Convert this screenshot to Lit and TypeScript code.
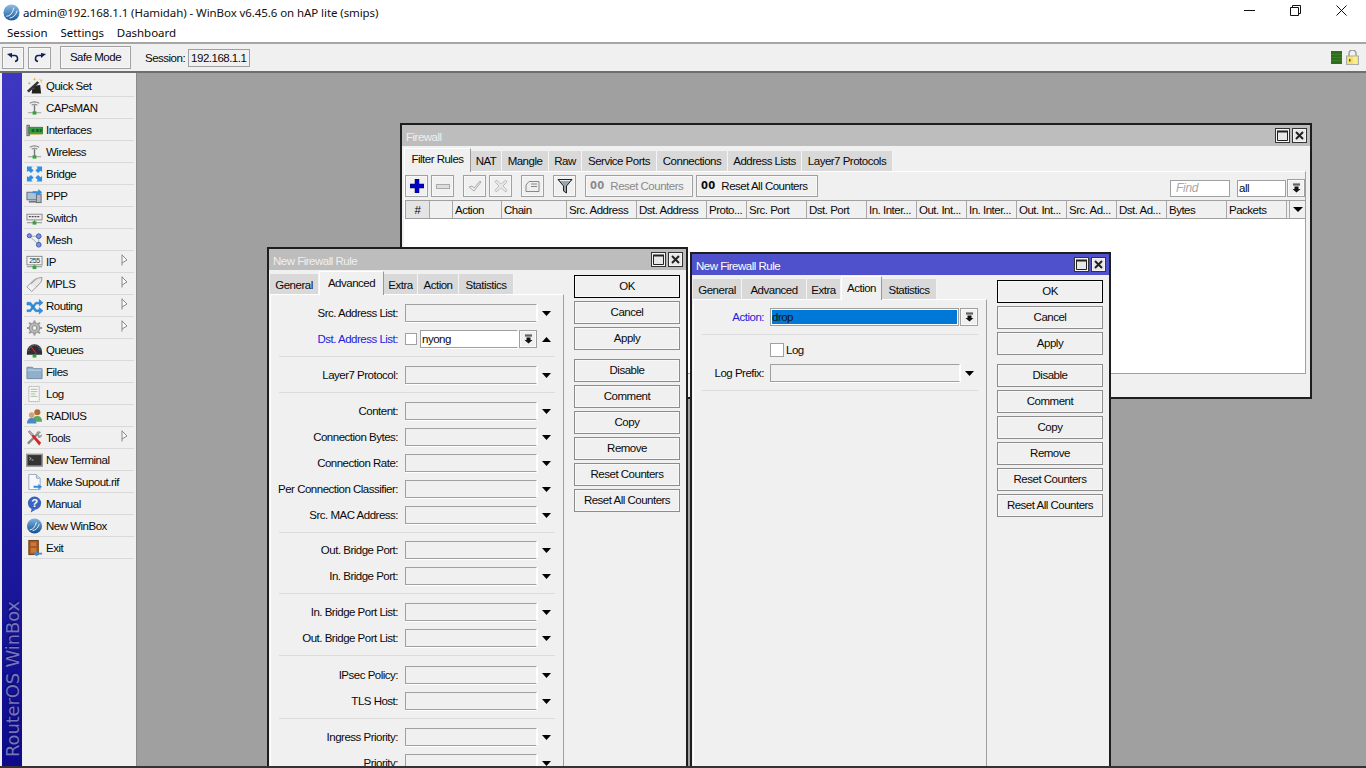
import { LitElement, html, css, svg } from "lit";
import { customElement } from "lit/decorators.js";

const ic = (b: any, box = "0 0 18 18") => html`<svg class="ic" viewBox=${box} width="17" height="18">${b}</svg>`;
const antenna = svg`<path d="M4 4q5-3 10 0M6 6q3-2 6 0" fill="none" stroke="#8a8a8a" stroke-width="1.2"/><path d="M9 6v7" stroke="#777" stroke-width="1.5"/><path d="M2 14h14" stroke="#9a9a9a"/><rect x="7" y="12.5" width="4" height="3.5" fill="#2fa82f"/>`;
const icons: Record<string, any> = {
  quick: ic(svg`<path d="M7 9l8-1 1 9H6z" fill="#222"/><path d="M6 12l2-2 1 1.500" fill="#bbb"/><path d="M1 14L12 4l2 1.500L3 16z" fill="#333"/><path d="M3 4l1 1.500 1.500.5-1.500.5-.5 1.500-.5-1.500-1.500-.5 1.500-.5z M9 0l.7 1.300 1.300.5-1.300.4-.7 1.300-.5-1.300-1.300-.4 1.300-.5z" fill="#e0b020"/><path d="M14 2l1 1 2-.5-1 1.500.5 1.500" stroke="#d8c060" fill="none"/>`),
  antenna: ic(antenna),
  card: ic(svg`<rect x="1" y="4" width="2.500" height="11" fill="#9fb5a5" stroke="#667"/><rect x="3" y="6" width="15" height="7" fill="#3f9a45" stroke="#2a6a30" stroke-width=".6"/><path d="M6 8h3v3H6zM10.500 8h3v3h-3zM14.500 8h2v3h-2z" fill="#163"/><path d="M4 13.500h13" stroke="#c8b040"/>`),
  bridge: ic(svg`<g fill="#2f8fe0"><path d="M1 1h6L5.500 2.700 8 5.200 5.200 8 2.700 5.500 1 7z"/><path d="M17 1v6l-1.700-1.500L12.800 8 10 5.200l2.500-2.500L11 1z"/><path d="M1 17v-6l1.700 1.500L5.200 10 8 12.800l-2.500 2.500L7 17z"/><path d="M17 17h-6l1.500-1.700L10 12.800 12.800 10l2.500 2.500L17 11z"/></g>`),
  ppp: ic(svg`<rect x="1" y="5" width="11" height="8" fill="#a8c4dc" stroke="#667"/><rect x="11" y="7" width="5" height="9" fill="#b8b8b8" stroke="#667"/><path d="M3 15h8" stroke="#777" stroke-width="2"/><path d="M7 4h6V1.500l4 3.500-4 3.500V6H7z" fill="#2f8fe0"/>`),
  sw: ic(svg`<rect x="1" y="5" width="16" height="6" fill="#eee" stroke="#888"/><path d="M3 7.500h2m1 0h2m1 0h2m1 0h2" stroke="#444" stroke-width="1.500"/><path d="M9 11v3M1 14h16" stroke="#888"/><rect x="7" y="12.500" width="4" height="3.500" fill="#2fa82f"/>`),
  mesh: ic(svg`<path d="M4 5h10M13.500 5v9M4 5l4 4 6 5" fill="none" stroke="#9aa" /><g fill="#7d90e0" stroke="#3f55b0"><circle cx="3.500" cy="4.500" r="2.200"/><circle cx="13.500" cy="5" r="2.500"/><circle cx="13.500" cy="14" r="2.500"/></g>`),
  ip: ic(svg`<rect x="1" y="3" width="16" height="9" fill="#f4f4f4" stroke="#888"/><text x="9" y="10.500" font-size="7.500" text-anchor="middle" font-family="Liberation Sans" fill="#333">255</text><path d="M9 12v2M1 14h16" stroke="#888"/><rect x="7" y="13" width="4" height="3.500" fill="#2fa82f"/>`),
  mpls: ic(svg`<g fill="#f2f2f2" stroke="#999"><path d="M1 12L9 4l6-1-1 6-8 8z"/><path d="M5 9l7-6 5-1-1 5-6 6" fill="#e8e8e8"/></g>`),
  routing: ic(svg`<path d="M1 5h4l6 8h3v-2.500l4 3.500-4 3.500V15h-4L4 8H1z M1 13h3l6-8h4V2l4 3.500L14 9V7h-3l-6 8H1z" fill="#2f8fe0" stroke="#1c6cb0" stroke-width=".4"/>`),
  gear: ic(svg`<circle cx="9" cy="9" r="5.500" fill="#bbb" stroke="#888"/><circle cx="9" cy="9" r="2.500" fill="#f0f0f0" stroke="#888"/><path d="M9 1v3M9 14v3M1 9h3M14 9h3M3.300 3.300l2 2M12.700 12.700l2 2M3.300 14.700l2-2M12.700 5.300l2-2" stroke="#999" stroke-width="2.200"/>`),
  queues: ic(svg`<path d="M1 11a8 8 0 0 1 16 0v3H1z" fill="#2e2e38"/><path d="M5 5l6 8" stroke="#e02020" stroke-width="1.200"/><path d="M3 10a6 6 0 0 1 12 0" fill="none" stroke="#8a8a98" stroke-dasharray="1 1"/><rect x="7" y="14" width="4" height="3" fill="#2fa82f"/>`),
  files: ic(svg`<path d="M1 4h6l1 1.500h9V16H1z" fill="#8fb0cc" stroke="#6c8aa4"/><path d="M1.500 7h15" stroke="#c8dcec"/>`),
  log: ic(svg`<path d="M3 1h11v16H3z" fill="#f6f6f2" stroke="#a8b0a8" stroke-dasharray="1.500 .5"/><path d="M5 4h7M5 6.500h7M5 9h5M5 11.500h7" stroke="#a8b8a8"/>`),
  radius: ic(svg`<circle cx="12" cy="5" r="3.200" fill="#b06a35"/><path d="M7 15q0-6 5-6t5 6z" fill="#5aa860"/><circle cx="6" cy="8" r="3" fill="#d8a070"/><path d="M1 17q0-6 5-6t5 6z" fill="#4a88c8"/>`),
  tools: ic(svg`<path d="M2 15L13 4" stroke="#888" stroke-width="2.500"/><path d="M11 3a3.500 3.500 0 0 1 5 0l-2.500 2 1 1.500L17 5a3.500 3.500 0 0 1-4 4z" fill="#999"/><path d="M2 2l2-1 12 13-2 3z" fill="#cf2a2a"/><path d="M2 2l2-1 4 4-2 2z" fill="#aaa"/>`),
  term: ic(svg`<rect x=".8" y="3" width="16.400" height="12.500" fill="#333" stroke="#999" stroke-width="1.600"/><path d="M3.500 6l2 1.500-2 1.500M6 9h2" stroke="#ddd" fill="none" stroke-width=".8"/>`),
  sup: ic(svg`<path d="M3 1h8l4 4v12H3z" fill="#f8f8f8" stroke="#9ab"/><path d="M11 1v4h4" fill="#ddd" stroke="#9ab"/><path d="M8 13h5v-2l4 3-4 3v-2H8z" fill="#2f8fe0"/>`),
  manual: ic(svg`<circle cx="9" cy="8" r="7" fill="#3c62c0"/><path d="M6 14l-1 4 5-3z" fill="#3c62c0"/><text x="9" y="12.500" font-size="12" font-weight="bold" text-anchor="middle" font-family="Liberation Sans" fill="#fff">?</text>`),
  ball: ic(svg`<defs><linearGradient id="bl" x1="0" y1="0" x2="0" y2="1"><stop offset="0" stop-color="#7fb4e0"/><stop offset="1" stop-color="#124e8c"/></linearGradient></defs><circle cx="9" cy="9" r="8" fill="url(#bl)"/><path d="M4 13q5 0 7-8M7 14q5-1 7-7" stroke="#eaf4ff" fill="none" stroke-width="1"/>`),
  exit: ic(svg`<rect x="3" y="1" width="10" height="15" fill="#a85a22" stroke="#703a12"/><rect x="5" y="3" width="6" height="4" fill="#c87a3a"/><rect x="5" y="9" width="6" height="5" fill="#c87a3a"/><path d="M8 14h4v-2l-4 3.500 4 2.500v-2h5v-2z" fill="#2f8fe0"/>`),
};

const menu = [
  ["Quick Set", "quick", 0], ["CAPsMAN", "antenna", 0], ["Interfaces", "card", 0], ["Wireless", "antenna", 0],
  ["Bridge", "bridge", 0], ["PPP", "ppp", 0], ["Switch", "sw", 0], ["Mesh", "mesh", 0], ["IP", "ip", 1],
  ["MPLS", "mpls", 1], ["Routing", "routing", 1], ["System", "gear", 1], ["Queues", "queues", 0], ["Files", "files", 0],
  ["Log", "log", 0], ["RADIUS", "radius", 0], ["Tools", "tools", 1], ["New Terminal", "term", 0],
  ["Make Supout.rif", "sup", 0], ["Manual", "manual", 0], ["New WinBox", "ball", 0], ["Exit", "exit", 0],
] as [string, string, number][];

const fwTabs: [string, number][] = [["Filter Rules", 67], ["NAT", 31], ["Mangle", 47], ["Raw", 33], ["Service Ports", 75], ["Connections", 71], ["Address Lists", 74], ["Layer7 Protocols", 91]];
const cols: [string, number][] = [["#", 24], ["", 23], ["Action", 49], ["Chain", 65], ["Src. Address", 70], ["Dst. Address", 70], ["Proto...", 40], ["Src. Port", 60], ["Dst. Port", 60], ["In. Inter...", 50], ["Out. Int...", 50], ["In. Inter...", 50], ["Out. Int...", 50], ["Src. Ad...", 50], ["Dst. Ad...", 50], ["Bytes", 60], ["Packets", 60], ["", 3]];
const ruleTabs: [string, number][] = [["General", 49], ["Advanced", 65], ["Extra", 34], ["Action", 41], ["Statistics", 55]];
const ruleButtons = ["OK", "Cancel", "Apply", "", "Disable", "Comment", "Copy", "Remove", "Reset Counters", "Reset All Counters"];
const groups = [
  ["Src. Address List:", "@dst"],
  ["Layer7 Protocol:"],
  ["Content:", "Connection Bytes:", "Connection Rate:", "Per Connection Classifier:", "Src. MAC Address:"],
  ["Out. Bridge Port:", "In. Bridge Port:"],
  ["In. Bridge Port List:", "Out. Bridge Port List:"],
  ["IPsec Policy:", "TLS Host:"],
  ["Ingress Priority:", "Priority:"],
];

@customElement("app-root")
export class AppRoot extends LitElement {
  static styles = css`
    :host { display: block; width: 1366px; height: 768px; overflow: hidden; background: #fff; font: 11.5px "Liberation Sans", Arial, sans-serif; letter-spacing: -0.5px; color: #0a0a0a; }
    * { box-sizing: border-box; }
    svg { display: block; flex: none; }
    .titlebar { height: 24px; display: flex; align-items: center; padding-left: 3px; font: 11.5px "Noto Sans", sans-serif; letter-spacing: -0.08px; color: #111; }
    .titlebar .t { margin-left: 3px; flex: 1; }
    .winbtns { display: flex; align-self: flex-start; padding: 5px 2px 0 0; }
    .winbtns span { width: 46px; height: 11px; display: flex; justify-content: center; }
    .menubar { height: 17px; display: flex; padding-left: 7px; gap: 13px; font: 11.5px "Noto Sans", sans-serif; letter-spacing: -0.05px; align-items: center; }
    .toolbar { height: 31px; margin-top: 1px; background: #f0f0f0; border-top: 2px solid #a6a6a6; border-bottom: 2px solid #6e6e6e; display: flex; align-items: center; padding: 0 7px 0 2px; }
    .tb { border: 1px solid #a0a0a0; box-shadow: inset 0 0 0 1px #f8f8f8; background: #f0f0f0; height: 22px; display: flex; align-items: center; justify-content: center; }
    .tb.u { width: 22px; } .tb.r { width: 23px; margin-left: 4px; }
    .tb.safe { width: 71px; margin-left: 9px; height: 23px; padding-bottom: 1px; }
    .sess { margin-left: 14px; }
    .sessv { margin-left: 3px; width: 62px; height: 18px; border: 1px solid #a0a0a0; padding-left: 2px; line-height: 16px; flex: 1 0 62px; max-width: 62px; margin-right: auto; background: #f0f0f0; }
    .lock { margin-left: 4px; }
    .main { display: flex; height: 693px; }
    .side { width: 137px; display: flex; background: #f0f0f0; border-right: 1px solid #8a8a8a; padding-left: 2px; flex: none; }
    .brand { width: 20px; background: linear-gradient(#3d37c2, #0d0b8c); position: relative; display: flex; align-items: flex-end; justify-content: center; padding-bottom: 9px; }
    .brand span { writing-mode: vertical-rl; transform: rotate(180deg); font: 18px "DejaVu Sans", sans-serif; letter-spacing: -.15px; color: #7475bb; text-shadow: 1px -1px 1px #0a0a60; white-space: nowrap; }
    .items { flex: 1; padding: 2px 2px 0 2px; }
    .it { height: 22px; border-bottom: 1px solid #d9d9d9; display: flex; align-items: center; padding-left: 2px; position: relative; }
    .it .ic { margin-right: 3px; }
    .it .sub { position: absolute; left: 97px; top: 3px; }
    .desk { flex: 1; background: #a0a0a0; position: relative; overflow: hidden; }
    .foot { height: 2px; background: #333; }
    .win { position: absolute; background: #f0f0f0; border: 2px solid #1e1e1e; display: flex; flex-direction: column; overflow: hidden; }
    .wt { height: 21px; background: #bdbdbd; color: #efefef; display: flex; align-items: center; padding-left: 4px; flex: none; }
    .win.on .wt { background: #4f50cc; color: #fff; }
    .wt .x { flex: 1; padding-top: 2px; }
    .wb { width: 15px; height: 15px; border: 1px solid #333; box-shadow: inset 0 0 0 1px #f4f4f4; background: #e8e8e8; display: flex; align-items: center; justify-content: center; margin-right: 2px; }
    .wb:last-child { margin-right: 3px; }
    .tabs { display: flex; align-items: flex-end; flex: none; }
    .tab { height: 20px; padding-top: 2px; background: #d9d9d9; border-right: 1px solid #f4f4f4; display: flex; align-items: center; justify-content: center; white-space: nowrap; }
    .tab.a { height: 24px; background: #f0f0f0; border-top: 1px solid #fff; border-left: 1px solid #fff; border-right: 1px solid #9a9a9a; padding: 0 0 1px; margin-bottom: -1px; position: relative; }
    .fw-tabs { height: 25px; padding-left: 2px; }
    .fw-tabs .tab { padding-top: 0; }
    .fw-tabs .tab.a { padding-bottom: 3px; }
    .panel { border-top: 1px solid #fff; border-left: 1px solid #fff; border-right: 1px solid #a0a0a0; }
    .fw-panel { margin: 0 4px 0 2px; height: 203px; display: flex; flex-direction: column; border-bottom: 1px solid #a0a0a0; }
    .fw-bar { display: flex; align-items: flex-start; padding: 3px 0 0 0; height: 28px; flex: none; }
    .tbtn { width: 23px; height: 22px; margin-right: 3px; }
    .gap6 { margin-left: 6px; }
    .rc { width: 108px; margin-left: 6px; margin-right: 3px; gap: 6px; justify-content: flex-start; padding: 0 0 1px 4px; }
    .rc.off { color: #8a8a8a; }
    .ra { width: 122px; margin-right: 0; margin-left: 0; }
    .oo { font: bold 10px "DejaVu Sans", sans-serif; letter-spacing: .2px; }
    .sp { flex: 1; }
    .find { width: 60px; height: 17px; margin-top: 5px; border: 1px solid #a0a0a0; background: #fff; color: #a8a8a8; font-style: italic; padding-left: 5px; line-height: 15px; font-size: 12px; letter-spacing: -.3px; }
    .all { width: 49px; height: 17px; margin: 5px 0 0 7px; border: 1px solid #a0a0a0; background: #fff; padding-left: 1px; line-height: 15px; }
    .dd { width: 18px; height: 18px; border: 1px solid #a0a0a0; background: #f0f0f0; display: flex; align-items: center; justify-content: center; box-shadow: inset 0 0 0 1px #fafafa; }
    .all + .dd { margin: 4px 0 0 1px; }
    .thead { display: flex; height: 19px; flex: none; border-top: 1px solid #a0a0a0; border-bottom: 1px solid #a0a0a0; border-left: 1px solid #a0a0a0; background: #f0f0f0; }
    .th { border-right: 1px solid #a8a8a8; display: flex; align-items: center; padding-left: 2px; white-space: nowrap; overflow: hidden; }
    .th.c { justify-content: center; padding: 0; }
    .th.sel { background: #e4e4e4; }
    .thend { flex: 1; display: flex; align-items: center; justify-content: center; }
    .tbody { flex: 1; background: #fff; }
    .rb { display: flex; flex: 1; min-height: 0; }
    .rl { width: 294px; display: flex; flex-direction: column; flex: none; margin-left: 1px; }
    .rtabs { height: 24px; }
    .rpanel { flex: 1; padding-top: 5px; }
    .rpanel.act { padding-top: 4px; }
    .row { height: 26px; display: flex; align-items: center; }
    .row.s { height: 20px; }
    .row.s .lg { padding-bottom: 1px; }
    .lab { width: 127px; text-align: right; white-space: nowrap; }
    .lab.b { color: #2222dd; }
    .fld { height: 18px; width: 132px; margin-left: 7px; border: 1px solid #a0a0a0; border-right-color: #fff; box-shadow: 1px 0 0 #fff, 0 1px 0 #fff; background: #f0f0f0; line-height: 16px; padding-left: 1px; }
    .arw { margin-left: 5px; }
    .chk { width: 12px; height: 12px; margin-left: 7px; border: 1px solid #a0a0a0; background: #fff; flex: none; }
    .fld.ny { width: 98px; margin-left: 3px; background: #fff; }
    .row .dd { margin-left: 1px; }
    .sep { height: 1px; background: #dcdcdc; margin: 4px 8px 5px 8px; }
    .sep.n { margin-bottom: 4px; }
    .sep.w { margin-bottom: 6px; }
    .act .lab { width: 70px; }
    .act .fld { margin-left: 6px; width: 189px; }
    .act .fld.drop { background: #0078d7; border: 1px solid #a0a0a0; box-shadow: inset 0 0 0 1px #fff; color: #111; padding-left: 1px; }
    .act .chk { margin-left: 76px; width: 14px; height: 14px; }
    .act .lg { margin-left: 2px; }
    .act .fld.lp { width: 190px; }
    .act .arw { margin-left: 5px; }
    .rbtns { display: flex; flex-direction: column; padding: 5px 0 0 10px; }
    .btn { width: 106px; height: 23px; margin-bottom: 3px; padding-bottom: 1px; border: 1px solid #8c8c8c; box-shadow: inset 0 0 0 1px #f8f8f8; background: #f0f0f0; display: flex; align-items: center; justify-content: center; }
    .btn.def { border-color: #000; }
    .bgap { height: 6px; }
  `;

  private down() { return html`<svg width="9" height="10" viewBox="0 0 9 10"><path d="M1 1h7M1 2h7" stroke="#111" stroke-width=".8"/><path d="M2.500 3.500h4V6H8.500L4.500 9.500.5 6h2z" fill="#111"/></svg>`; }
  private tri(up = false) { return html`<svg class="arw" width="9" height="5" viewBox="0 0 9 5"><path d=${up ? "M0 5L4.500 0 9 5z" : "M0 0h9L4.500 5z"} fill="#000"/></svg>`; }
  private winCtl() {
    return html`<span class="wb"><svg width="11" height="11" viewBox="0 0 11 11"><path d="M.5 1.500h10v9H.500z" fill="none" stroke="#222"/><path d="M0 1.500h11" stroke="#222" stroke-width="2"/></svg></span>
    <span class="wb"><svg width="9" height="9" viewBox="0 0 9 9"><path d="M1 1l7 7M8 1L1 8" stroke="#222" stroke-width="2"/></svg></span>`;
  }
  private tabs(list: [string, number][], active: number, cls: string) {
    return html`<div class="tabs ${cls}">${list.map(([t, w], i) => html`<div class="tab ${i === active ? "a" : ""}" style="width:${w}px">${t}</div>`)}</div>`;
  }
  private buttons() {
    return html`<div class="rbtns">${ruleButtons.map((b) => b ? html`<div class="btn ${b === "OK" ? "def" : ""}">${b}</div>` : html`<div class="bgap"></div>`)}</div>`;
  }

  private firewall() {
    const filt = html`<svg width="16" height="16" viewBox="0 0 16 16"><path d="M1 1.500h14L9.500 8v7L6.500 13V8z" fill="#9aa6ad" stroke="#222"/><path d="M3 2.500h10" stroke="#eee"/></svg>`;
    return html`<div class="win" style="left:263px;top:50px;width:912px;height:276px">
      <div class="wt"><span class="x">Firewall</span>${this.winCtl()}</div>
      ${this.tabs(fwTabs, 0, "fw-tabs")}
      <div class="panel fw-panel">
        <div class="fw-bar">
          <div class="tb tbtn"><svg width="14" height="14" viewBox="0 0 14 14"><path d="M5 0h4v5h5v4H9v5H5V9H0V5h5z" fill="#0000c8" stroke="#000050" stroke-width=".5"/></svg></div>
          <div class="tb tbtn"><svg width="14" height="5" viewBox="0 0 14 5"><rect x=".5" y=".5" width="13" height="4" fill="#ddd" stroke="#aaa"/></svg></div>
          <div class="tb tbtn gap6"><svg width="14" height="14" viewBox="0 0 14 14"><path d="M1 8l3-1 2 2 6-7 1 1-7 9z" fill="#eee" stroke="#aaa"/></svg></div>
          <div class="tb tbtn"><svg width="14" height="14" viewBox="0 0 14 14"><path d="M2 1l5 4 5-4 1 2-4 4 4 4-1 2-5-4-5 4-1-2 4-4-4-4z" fill="#e8e8e8" stroke="#aaa" stroke-dasharray="1 .5"/></svg></div>
          <div class="tb tbtn gap6" ><svg width="15" height="13" viewBox="0 0 15 13"><path d="M4 1.500h10v10H1V5z" fill="#eee" stroke="#888"/><path d="M6 4h6M6 6.500h6" stroke="#888"/></svg></div>
          <div class="tb tbtn gap6">${filt}</div>
          <div class="tb rc off"><span class="oo">00</span> Reset Counters</div>
          <div class="tb rc ra"><span class="oo">00</span> Reset All Counters</div>
          <span class="sp"></span>
          <div class="find">Find</div><div class="all">all</div><div class="dd">${this.down()}</div>
        </div>
        <div class="thead">
          ${cols.map(([c, w]) => html`<div class="th ${c === "#" ? "c sel" : ""}" style="width:${w}px">${c}</div>`)}
          <div class="thend"><svg width="10" height="5" viewBox="0 0 10 5"><path d="M0 0h10L5 5z" fill="#000"/></svg></div>
        </div>
        <div class="tbody"></div>
      </div>
    </div>`;
  }

  private leftRule() {
    return html`<div class="win" style="left:130px;top:174px;width:421px;height:560px">
      <div class="wt"><span class="x">New Firewall Rule</span>${this.winCtl()}</div>
      <div class="rb">
        <div class="rl">
          ${this.tabs(ruleTabs, 1, "rtabs")}
          <div class="panel rpanel">
            ${groups.map((g, gi) => html`
              ${g.map((l) => l === "@dst"
                ? html`<div class="row"><span class="lab b">Dst. Address List:</span><span class="chk"></span><div class="fld ny">nyong</div><div class="dd">${this.down()}</div>${this.tri(true)}</div>`
                : html`<div class="row"><span class="lab">${l}</span><div class="fld"></div>${this.tri()}</div>`)}
              ${gi < groups.length - 1 ? html`<div class="sep ${gi === 2 ? "n" : gi === 4 ? "w" : ""}"></div>` : ""}`)}
          </div>
        </div>
        ${this.buttons()}
      </div>
    </div>`;
  }

  private rightRule() {
    return html`<div class="win on" style="left:553px;top:179px;width:421px;height:560px">
      <div class="wt"><span class="x">New Firewall Rule</span>${this.winCtl()}</div>
      <div class="rb">
        <div class="rl">
          ${this.tabs(ruleTabs, 3, "rtabs")}
          <div class="panel rpanel act">
            <div class="row"><span class="lab b">Action:</span><div class="fld drop">drop</div><div class="dd">${this.down()}</div></div>
            <div class="sep"></div>
            <div class="row s"><span class="chk"></span><span class="lg">Log</span></div>
            <div class="row"><span class="lab">Log Prefix:</span><div class="fld lp"></div>${this.tri()}</div>
            <div class="sep"></div>
          </div>
        </div>
        ${this.buttons()}
      </div>
    </div>`;
  }

  render() {
    return html`
      <div class="titlebar">
        <svg width="17" height="17" viewBox="0 0 18 18"><defs><linearGradient id="tb" x1="0" y1="0" x2="0" y2="1"><stop offset="0" stop-color="#8fbde6"/><stop offset="1" stop-color="#1a5a9a"/></linearGradient></defs><circle cx="9" cy="9" r="8.500" fill="url(#tb)"/><path d="M3.500 13q6 0 8-9M7 15q6-1 8-8" stroke="#f2f8ff" fill="none"/></svg>
        <span class="t">admin@192.168.1.1 (Hamidah) - WinBox v6.45.6 on hAP lite (smips)</span>
        <div class="winbtns">
          <span><svg width="11" height="11" viewBox="0 0 11 11"><path d="M0 5.500h11" stroke="#111"/></svg></span>
          <span><svg width="11" height="11" viewBox="0 0 11 11"><path d="M.5 2.500h8v8h-8zM2.500 2.500V.5h8v8H8.500" fill="none" stroke="#111"/></svg></span>
          <span><svg width="11" height="11" viewBox="0 0 11 11"><path d="M.5.500l10 10M10.500.500l-10 10" stroke="#111"/></svg></span>
        </div>
      </div>
      <div class="menubar"><span>Session</span><span>Settings</span><span>Dashboard</span></div>
      <div class="toolbar">
        <div class="tb u"><svg width="13" height="11" viewBox="0 0 13 11"><path d="M0 2l5-1v5z" fill="#12205a"/><path d="M4 3.500h3a3 3 0 0 1 1 6" fill="none" stroke="#12205a" stroke-width="1.500"/></svg></div>
        <div class="tb r"><svg width="13" height="11" viewBox="0 0 13 11"><path d="M13 2L8 1v5z" fill="#12205a"/><path d="M9 3.500H6a3 3 0 0 0-1 6" fill="none" stroke="#12205a" stroke-width="1.500"/></svg></div>
        <div class="tb safe">Safe Mode</div>
        <span class="sess">Session:</span>
        <div class="sessv">192.168.1.1</div>
        <svg width="11" height="13" viewBox="0 0 11 13"><rect width="11" height="13" fill="#2f6f1c"/><path d="M0 3.500h11M0 6.500h11M0 9.500h11" stroke="#4a8a30" stroke-width=".6"/></svg>
        <svg class="lock" width="13" height="15" viewBox="0 0 13 15"><path d="M3 6V3.500a3.500 3.500 0 0 1 7 0V6" fill="none" stroke="#999" stroke-width="1.400"/><rect x=".5" y="6" width="12" height="8.500" fill="#f6e26a" stroke="#aaa"/><path d="M8 6.500v7.500M10 6.500v7.500" stroke="#fff6b8"/><rect x="3" y="9" width="1.500" height="2.500" fill="#555"/></svg>
      </div>
      <div class="main">
        <div class="side">
          <div class="brand"><span>RouterOS WinBox</span></div>
          <div class="items">
            ${menu.map(([n, i, s]) => html`<div class="it">${icons[i]}<span>${n}</span>${s ? html`<svg class="sub" width="8" height="12" viewBox="0 0 8 12"><path d="M1 .500v11M1 1l5 5-5 3" fill="#fafafa" stroke="#888"/></svg>` : ""}</div>`)}
          </div>
        </div>
        <div class="desk">${this.firewall()}${this.leftRule()}${this.rightRule()}</div>
      </div>
      <div class="foot"></div>
    `;
  }
}
